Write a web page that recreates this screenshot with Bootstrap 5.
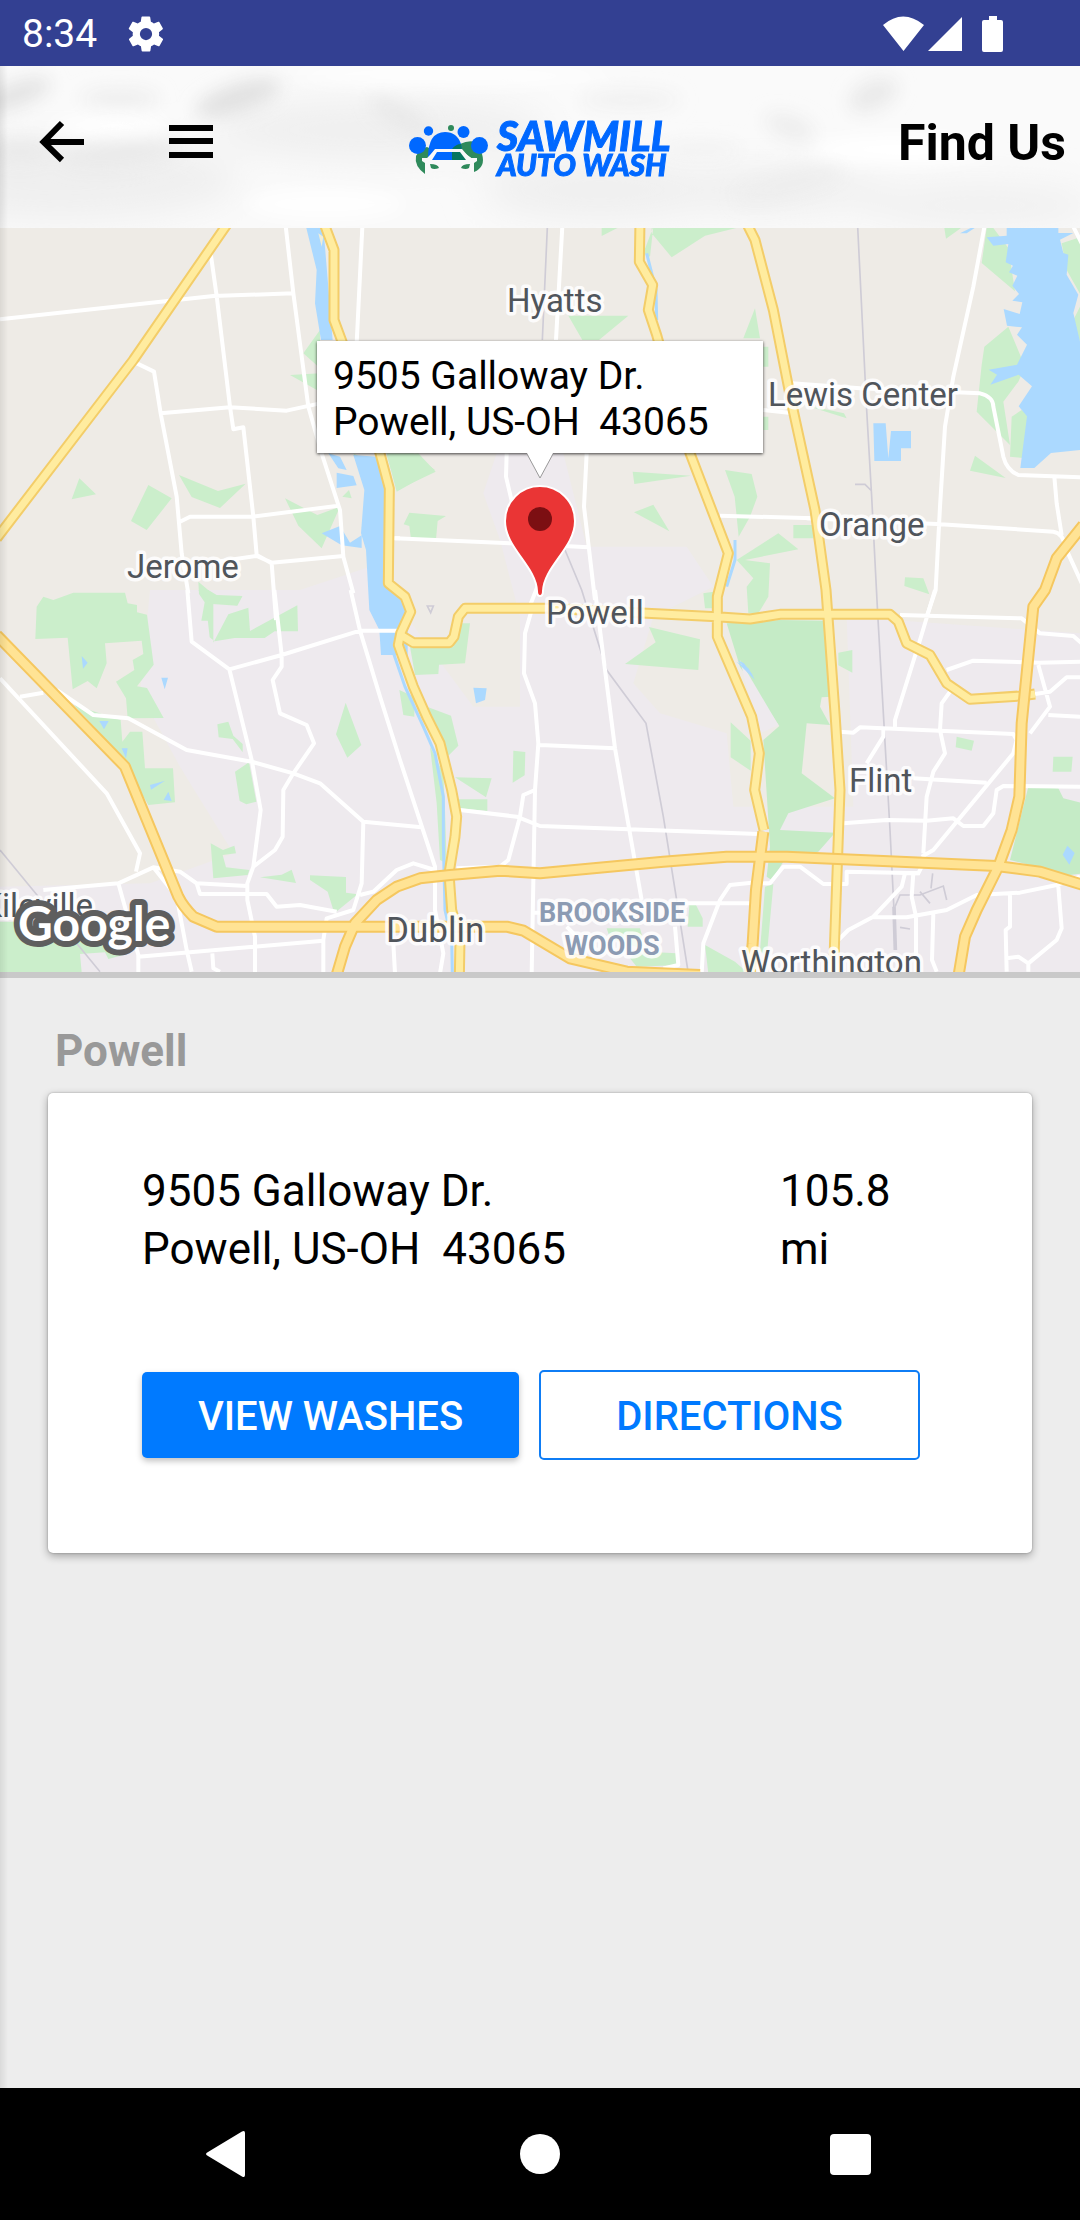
<!DOCTYPE html>
<html lang="en">
<head>
<meta charset="utf-8">
<meta name="viewport" content="width=device-width, initial-scale=1">
<title>Find Us</title>
<link href="https://cdn.jsdelivr.net/npm/bootstrap@5.3.0/dist/css/bootstrap.min.css" rel="stylesheet">
<style>
body{font-family:Roboto,"Liberation Sans",sans-serif;background:#ededed;color:#000}
svg{display:block}
.screen{min-height:100vh}
.status-bar{background:#334092;height:66px;padding:2px 77px 0 22px;font-size:39px;line-height:48px}
.app-body::after{content:"";position:absolute;left:0;top:0;bottom:0;width:8px;background:linear-gradient(90deg,rgba(0,0,0,.08),transparent);pointer-events:none;z-index:3}
.app-header{height:162px;padding:0 14px 8px;display:grid;grid-template-columns:1fr auto 1fr;background:#fafafa}
.clouds{position:absolute;inset:0;width:100%;height:100%}
.tools{gap:80px;padding-left:24px}
.page-title{font-size:50px;line-height:60px;font-weight:700}
.map-area{height:750px;border-bottom:6px solid #c9c9c9;background:#eeebe6}
.map-layer{position:absolute;inset:0;width:100%;height:100%}
.urban{fill:#eeeaee}
.green{fill:#cbeecb}
.forest{fill:#c5ebc6}
.water{fill:#abd9ff}
.stream{fill:none;stroke:#abd9ff;stroke-width:9}
.street{fill:none;stroke:#fff;stroke-width:12;stroke-linejoin:round}
.rail{fill:none;stroke:#cfccd6;stroke-width:5}
.casing{fill:none;stroke:#f3cd69;stroke-width:33;stroke-linejoin:round}
.core{fill:none;stroke:#ffec9f;stroke-width:21;stroke-linejoin:round}
.casing-hw{fill:none;stroke:#f5c75f;stroke-width:36;stroke-linejoin:round}
.core-hw{fill:none;stroke:#ffe394;stroke-width:24;stroke-linejoin:round}
.place{font-size:33px;fill:#50555b;stroke:#fff;stroke-width:7px;stroke-linejoin:round;paint-order:stroke;stroke-opacity:.85}
.place-lg{font-size:35px}
.district{font-size:27px;font-weight:700;fill:#8c9bb3}
.attribution{font-family:Lato,sans-serif;font-size:48px;font-weight:700;fill:#fff;stroke:#5e5e5e;stroke-width:12px;stroke-linejoin:round;paint-order:stroke}
.logo-type{font-family:Lato,sans-serif;font-weight:900;font-style:italic;fill:#0068ff;stroke:#0068ff;stroke-width:1px}
.logo-big{font-size:41px}
.logo-small{font-size:30px}
.callout{position:absolute;left:50%;top:113px;transform:translateX(-50%);width:446px;padding:12px 16px 8px;font-size:39px;line-height:46px;background:#fff;box-shadow:0 1px 3px rgba(0,0,0,.75)}
.callout-tip{position:absolute;left:50%;top:100%;width:26px;height:26px;transform:translateX(-50%)}
.pin{position:absolute;left:50%;top:256px;transform:translateX(-50%)}
.addr{white-space:pre-line;line-height:inherit}
.locations{padding:45px 48px}
.location-name{font-size:44px;line-height:56px;font-weight:700;color:#999;margin:0 0 14px;padding-left:7px}
.location-card{border:0;border-radius:5px;box-shadow:0 3px 8px rgba(0,0,0,.32),0 0 2px rgba(0,0,0,.3)}
.location-body{padding:69px 112px 93px 94px;font-size:44px;line-height:58px}
.location-info{margin-bottom:92px}
.distance{width:18%}
.act{flex:1 1 0;height:86px;font-size:40px;line-height:46px;font-weight:500;border-radius:5px;padding:3px 0 0}
.act-fill{background:#007aff;color:#fff;border:0;box-shadow:0 3px 6px rgba(0,0,0,.25)}
.act-line{height:90px;color:#007aff;background:#fff;border:2px solid #0f7df5}
.actions{gap:20px}
.system-nav{height:132px;gap:268px}
</style>
<script src="https://cdn.jsdelivr.net/npm/bootstrap@5.3.0/dist/js/bootstrap.bundle.min.js"></script>
</head>
<body>
<div class="screen d-flex flex-column">
<div class="status-bar d-flex align-items-center justify-content-between text-white">
  <div class="d-flex align-items-center gap-4">
    <span>8:34</span>
    <svg width="50" height="42" viewBox="0 0 24 24" fill="#fff" aria-hidden="true"><path d="M19.4 13c0-.3.1-.6.1-1s0-.7-.1-1l2.1-1.700c.2-.2.2-.4.1-.6l-2-3.500c-.1-.2-.4-.3-.6-.2l-2.500 1c-.5-.4-1.100-.7-1.700-1l-.4-2.600c0-.2-.2-.4-.5-.4h-4c-.2 0-.5.2-.5.4l-.4 2.600c-.6.3-1.200.6-1.700 1l-2.500-1c-.2-.1-.5 0-.6.2l-2 3.500c-.1.2-.1.5.1.6L4.500 11c0 .3-.1.600-.1 1s0 .7.1 1l-2.100 1.700c-.2.2-.2.4-.1.6l2 3.500c.1.2.4.3.6.2l2.500-1c.5.4 1.100.7 1.700 1l.4 2.600c0 .2.200.4.5.4h4c.2 0 .5-.2.5-.4l.4-2.600c.6-.3 1.200-.6 1.700-1l2.500 1c.2.1.5 0 .6-.2l2-3.500c.1-.2.1-.5-.1-.6zM12 15.500a3.500 3.500 0 1 1 0-7 3.500 3.500 0 0 1 0 7z"/></svg>
  </div>
  <svg width="120" height="38" viewBox="883 14 120 38" fill="#fff" aria-hidden="true"><path d="M883 24q20-17 41 0l-20.500 26zM928 50l34-34v34zM989 15h8v4h4q2 0 2 2v28q0 2-2 2h-17q-2 0-2-2V21q0-2 2-2h5z"/></svg>
</div>

<div class="app-body position-relative flex-grow-1">
<header class="app-header position-relative align-items-center">
  <svg class="clouds" viewBox="0 66 1080 162" preserveAspectRatio="none" aria-hidden="true">
    <defs>
      <filter id="soft" x="-20%" y="-20%" width="140%" height="140%"><feGaussianBlur stdDeviation="9"/></filter>
      <filter id="haze" x="-20%" y="-20%" width="140%" height="140%"><feGaussianBlur stdDeviation="18"/></filter>
    </defs>
    <g filter="url(#haze)" fill="#efefef">
      <ellipse cx="60" cy="180" rx="180" ry="40"/><ellipse cx="380" cy="130" rx="170" ry="30"/><ellipse cx="600" cy="190" rx="120" ry="30"/><ellipse cx="760" cy="190" rx="130" ry="22"/><ellipse cx="980" cy="205" rx="120" ry="20"/>
    </g>
    <g filter="url(#soft)">
      <ellipse cx="20" cy="152" rx="34" ry="11" fill="#e9e9e9"/>
      <ellipse cx="15" cy="95" rx="38" ry="12" fill="#e3e3e3" transform="rotate(-20 15 95)"/>
      <ellipse cx="120" cy="98" rx="40" ry="8" fill="#ececec"/>
      <ellipse cx="238" cy="98" rx="44" ry="14" fill="#e1e1e1" transform="rotate(-18 238 98)"/>
      <ellipse cx="120" cy="154" rx="60" ry="12" fill="#e9e9e9" transform="rotate(-6 120 154)"/>
      <ellipse cx="400" cy="116" rx="34" ry="10" fill="#e8e8e8" transform="rotate(30 400 116)"/>
      <ellipse cx="630" cy="100" rx="50" ry="9" fill="#f0f0f0"/>
      <ellipse cx="873" cy="95" rx="26" ry="14" fill="#e9e9e9" transform="rotate(-25 873 95)"/>
      <ellipse cx="790" cy="127" rx="26" ry="11" fill="#ececec" transform="rotate(20 790 127)"/>
      <ellipse cx="790" cy="184" rx="56" ry="11" fill="#ededed" transform="rotate(-14 790 184)"/>
      <ellipse cx="700" cy="150" rx="40" ry="8" fill="#f2f2f2"/>
      <ellipse cx="325" cy="204" rx="80" ry="16" fill="#fff" opacity=".8"/>
      <ellipse cx="110" cy="126" rx="60" ry="10" fill="#fff"/>
      <ellipse cx="450" cy="76" rx="160" ry="8" fill="#fff"/>
      <ellipse cx="900" cy="150" rx="90" ry="14" fill="#fff"/>
    </g>
  </svg>
  <div class="tools d-flex align-items-center position-relative">
    <button class="btn p-0 border-0" aria-label="Back"><svg width="48" height="48" viewBox="38 119 48 48"><path d="M84 142H45M62 123L43.500 142 62 160" fill="none" stroke="#000" stroke-width="6"/></svg></button>
    <button class="btn p-0 border-0" aria-label="Menu"><svg width="48" height="48" viewBox="166 119 48 48"><path d="M169 125h44v6h-44zM169 138h44v6h-44zM169 152h44v6h-44z"/></svg></button>
  </div>
  <svg class="position-relative overflow-visible" width="262" height="68" viewBox="410 109 262 68" role="img" aria-label="Sawmill Auto Wash">
    <path fill="#2f8a5b" d="M417 156q4-8 11-9l8 4-9 9-1 14q-11-8-9-18zM461 144q10-5 19-1l3 11q4 13-8 18v-12l-12-9z"/>
    <circle cx="452" cy="128" r="3" fill="#2f8a5b"/>
    <g fill="#0068ff"><path d="M429 158q0-26 17-26 12 0 16 12l2 14z"/><circle cx="418.500" cy="145.500" r="8.500"/><circle cx="429.500" cy="131" r="4.700"/><circle cx="464.500" cy="132" r="6"/><circle cx="480.500" cy="145.500" r="8.500"/></g>
    <path fill="#06765f" d="M453 149q4-5 9-5l2 12h-11z"/>
    <path fill="#f8f8f8" d="M426 176V163l-3-2v-3h5l3-3 5-6h27l6 7 3 2h6v3l-3 2v13h-6l-3-5h-32l-3 5z"/>
    <path fill="#0068ff" d="M438 152h15v8h-20z"/><path fill="#06765f" d="M453 152h8l6 8h-14z"/>
    <path fill="#2f8a5b" d="M431 164q8 0 9 4-5 2-8 0zM471 164q-8 0-9 4 5 2 8 0z"/>
    <g class="logo-type">
      <text class="logo-big" x="498" y="151">SAWMILL</text>
      <text class="logo-small" x="498" y="176">AUTO WASH</text>
    </g>
  </svg>
  <h1 class="page-title position-relative text-end m-0">Find Us</h1>
</header>

<section class="map-area position-relative overflow-hidden" aria-label="Map">
  <!-- Terrain and roads, drawn in six tiles at three units per pixel -->
  <svg class="map-layer" viewBox="0 684 3240 2232" preserveAspectRatio="xMidYMid slice" aria-hidden="true">
    <g class="urban">
      <path d="M450 1770L900 1770 1110 1700 1220 1850 1420 2120H1560V1850L1500 1620 1450 1480 1490 1360H1690L1760 1640H2060L2140 1760 1960 1850 1900 2050 1980 2140 2180 2200 2200 2420 2560 2420 2540 1850 3240 1900V2916H0V2660L450 2650 700 2560 540 2300 420 2080Z"/>
    </g>
    <g class="green">
      <g transform="translate(0 660)"><path d="M238 775l50 48-73 15zM445 795l70 40-75 95-47-27zM537 765l117 48 83-22-77 73-85-33zM855 835l97 50 68-25-55 125-70-68zM1027 830l20-20 8 25zM960 330l-50 70 50 45v70l-90-50 90-5zM1060 700l75 40 25 60-70-40zM1160 700h80l65 50-115 65zM1100 850l-15 75 20-10zM595 1085l50 42 82 2-15 28-75-5-8 50h-25l10-55-17-25z"/></g>
      <g transform="translate(1140 660)"><path d="M20 705l95-5 52 55-115 55zM88 878l110 10-25 15-5 55h-75l-5-40-17-5zM665 20h55l-55 28zM815 40V20h270l-110 27-100 65zM790 100l20 10 10-90zM565 287h180l-88 73h-50zM758 755l175 12-170 25zM762 877l58-23 48 80zM1035 750l80 12 17 68-22 60-34 60-12-120zM1070 1020l125-80 60 48-160 32 75 10-5 100-30 50h-30l-5-80 20-25zM970 1120l30-5v50h-25zM1090 355l35-90 15 90zM1150 380h15v60h-15zM1150 590h15v40h-15z"/></g>
      <g transform="translate(2160 660)"><path d="M673 24h50l-45 32zM800 24h20l45 60 20 130-100-85zM865 320l50 120-20 45-45 60 20 130-100-100 15-140 8-55zM875 590l30-20 18 15-8 130-45-5zM765 707l92 67-107-22zM220 915h60v40h-60zM555 1072l55 3 18 48-75-25zM1025 70l60-20V230l-45-80zM1090 240v160l-30-100zM270 560l110 35-8-15-70-15z"/></g>
      <g transform="translate(0 1770)"><path d="M110 50l20-30 30 10 60-22 155 0 8 32 28 5v22l30 7 20 150-50 65 30 5 50 90-108 1-5-60-30-50 55-35-5-30 32-18-5-40-110 8 5 60-30 75-27-22-45 25-15-155-97 4zM595 0h30l25 15 77 3-17 28-70-8v120l45-85 60-20 5 70 142-77 2 78-70 0-30 20-90 0-60 10-15-12-10-90 12-20zM222 345l140 45 5 65 23-30 37 0 8 110 84 0 6 102-80 8-80-140-60-70zM652 403l33-8 15 42 28 25 0 25-30-40-42-5zM1037 338l47 127-42 38-34-70zM705 545l42-28 22 118-30 8-20-10zM632 760l37 20 34-13 5 23-40 5 10 37 70 8-5 15-103 10zM780 862l65-8 30-15 13 40zM930 856l108 5 0 47 35 5-70 57-20-65-53-35zM0 995h70v60h260l40 40-45 12-10-20-75 5 5 55H0z"/></g>
      <g transform="translate(1140 1770)"><path d="M90 170h130l15-70h35l-15 120-78 4-2 28-70 3zM145 352l68 25 22 90-30 30-40-90zM58 300l45 20v60l-33-5zM400 482l36 4-2 70-36 22zM225 562l110 3-17 57zM235 628h87v35l-85-8zM735 222l92-65-20-46 153 37-5 92zM1052 397l60 55v90l-60-40zM150 470l40 80 5 110 5 160-20-10-10-170zM928 945h20l20 40v25h-45zM680 1015l100 0 20 70 90 5 10 35-130 5-20-25 30-30-90-30zM975 1065l90 50 40 35-120 0z"/></g>
      <g transform="translate(2160 1770)"><path d="M355 188l42-8v68l-42-22zM710 440l52 12-7 30-48-10zM1000 500h58l-4 45h-56zM135 890l25-8-20 220-20-20z"/></g>
    </g>
    <g class="forest" transform="translate(2160 1770)">
      <path d="M20 100L180 90 320 92 335 320 305 322 300 350 330 405 260 400 245 550 345 625 205 670 180 720 345 728 295 785 190 815 155 870 140 860 150 770 130 450 178 408 60 230ZM925 590l90 5 15 30 60 15v210l-40 5-180-45z"/>
      <path fill="#eeeaee" d="M60 210l115 195-55 25-40-140z"/>
    </g>
    <g class="water">
      <g transform="translate(0 660)"><path d="M918 20h52l28 340-35 0-18-110 5-100zM985 700l35 10 20 40-25-5zM1010 758l50 10 10 28-60 8zM965 940l55-22 30 50 35-22v38l-60-8zM1060 705l70 5 35 95 8 290 50 50v160h-80l-5-75-30-60-10-180-15-50 10-130z"/><path d="M955 40l10 40 5-30z" fill="#f0eed8"/></g>
      <g transform="translate(2160 660)"><path d="M860 24h155v15l45 0-40 20 10 40 15 5-5 60 35 60-15 55 28 120v290l-95 10-50 45-42 0 20-155-25-30 40-60-40-35-85 30 20-30-25-15 85-15 30-60-30-30 15-22-45-5-10-50 48 15 8-35-30-5 20-20-20-25 15-30-25-10 12-20-22-10 8-55-45 5-20-25 60-5zM460 610h37l8 105 8-82h60v52h-30v38h-80zM720 40l40-20 10 0-30 20z"/></g>
      <g transform="translate(0 1770)"><path d="M245 198l18 20-14 18zM484 263h20l-10 35zM298 393h28l-14 25zM365 475h18l-5 30zM450 585l45-13-42 27zM505 605l10 28-24-3z"/></g>
      <g transform="translate(1140 1770)"><path d="M280 293l40 2-5 35-27 10zM1072 210l20 10 30 40z"/></g>
      <g transform="translate(2160 1770)"><path d="M50 215l35 20 20 35zM1042 767l22 22-16 35-20-30z"/></g>
    </g>
    <path class="stream" transform="translate(1140 1770)" d="M20 130L75 290 130 410 165 490 190 620 190 760 195 960 215 1050 217 1150M800-1010L828-900 830-810M1065-150L1065-90 1040-10"/>
    <g class="rail">
      <path transform="translate(1140 1770)" d="M503-1110L487-750M555-120L605 0 680 240 798 400 850 680 890 930 925 1150M142 48h18l-8 20z"/>
      <path transform="translate(2160 1770)" d="M413-1090L440-540 455-280 473 70 510 720 522 960 M405-317h30l20 20"/>
      <path transform="translate(2160 1770)" d="M522 950L526 1080" stroke-width="11"/>
      <path transform="translate(2160 1770)" d="M525 950l15-35h60l70-27 10 42M600 905l30 35M638 850l-5 45M540 1012l30 5"/>
      <path transform="translate(0 1770)" d="M0 780L300 1145"/>
    </g>
    <g class="street">
      <path transform="translate(0 660)" d="M0 298L640 228 880 220M632 100L650 228 690 560 700 628 730 622 760 890 770 1005 815 1030 828 1200M400 425L462 455 482 580 530 830 545 1000 565 1120M482 580L690 562 860 572 960 550M855 0L880 220 925 560 965 700 1020 870 1030 1010 1060 1120M540 905L570 890H760L1015 857M650 1025L770 1008 815 1028 1030 1008M1088 0L1070 370M1180 955H1200"/>
      <path transform="translate(1140 660)" d="M548 0L528 360M380 700L378 770 420 950M620 700L612 860 645 1140M45 955L390 970 625 982M1020 887L1300 895M480 1080L445 1170"/>
      <path transform="translate(2160 660)" d="M797 0L760 200 700 470 675 620 660 860 647 1110 620 1190M130 570L220 580M215 490L420 505 780 520Q820 530 820 560L850 710Q860 750 895 765L1090 772M1003 770L1010 850 1025 945M260 895L650 912 1000 935Q1030 940 1035 980L1090 1100M1060 20L1090 80"/>
      <path transform="translate(0 1770)" d="M562 0L575 155 688 238 755 510 782 660 760 830 742 880V930L765 1040V1150M688 238L845 195 1080 122H1200M823 0L845 195 845 230 818 270 840 370 920 405 942 460 880 550 850 600 848 740 825 780 760 830M1052 0L1080 122 1140 320 1200 510 1305 830V960L1330 1090 1320 1150M60 320L130 308M0 265L320 610 420 790 408 845M170 300L280 375 385 385 560 480 755 515 880 550 960 580 1090 695 1265 712M1090 695L1085 880 1060 960 980 985 970 1050V1150M130 900L355 880 460 832 540 845 590 880 740 888M590 880L600 912H800L830 950 900 945 1010 965M355 880L415 1095V1150M460 832L530 920 560 1080 575 1145M415 1100L970 1052M637 1090L640 1135 660 1145M1080 915L1120 905 1190 840 1240 820 1305 840M1180 1060L1185 1150"/>
      <path transform="translate(1140 1770)" d="M455 60L435 130 432 250 465 340 475 460 465 600 455 1150M465 600L430 615 420 680 385 810 360 830 230 835M240 660L410 680 480 708 1135 732M480 465L705 475M645 0L670 200 705 475 785 930M455 968H480M890 940H1110M1115 878L1050 885 1020 930 970 1060 965 1150M1130 880H1170L1210 830H1260L1330 882H1400V845L1620 850M885 1010L895 1125 850 1135M560 1010L600 1050"/>
      <path transform="translate(2160 1770)" d="M645 0L600 150 525 390V410M540 75L905 85 960 130 1060 138 1085 160M680 240L760 212 960 218 1080 215M955 225L990 350 930 430M945 312L990 305 1040 262H1080M985 375L1080 380M690 305L665 340 660 420 675 490 640 545 620 620 610 790M360 425L400 428 420 412 880 432 890 450 880 490 640 780 605 800M490 420V440L440 520M580 565L800 578M370 700L500 690 620 692 700 685 730 708H790L820 670 830 600 850 588 1080 590M605 830L595 850H555L545 890 460 980 385 1020 355 1050M460 982H560L680 960 770 915 900 908 1010 885 1080 860M580 850L575 920 588 980V1150M640 970L636 1110 650 1145M870 915V1010L857 1020 860 1145M1015 890L1025 1015 1010 1050 925 1120 895 1100 860 1105M925 1120V1145"/>
    </g>
    <defs>
      <g id="arterials">
        <path transform="translate(0 660)" d="M690 0L400 420-10 955"/>
        <path transform="translate(1140 1770)" d="M-168-1100L-138-1020V-810L-112-740 0-410 28-305 25-20 75 20 92 65 62 130 55 165 100 290 140 380 180 460 215 600 230 680 225 740 207 850 215 960 240 1050 238 1160"/>
        <path transform="translate(1140 1770)" d="M62 135L100 158H208L222 140 235 80 255 55H500L800 70 1010 80 1110 87 1200 73H1530L1555 95 1580 160 1650 195 1700 280 1770 328 1920 318 1965 312M780-1110L778-985 818-915 805-840 830-765 930-410 1045-110 1012 20V140L1115 380 1138 490 1124 600 1152 720"/>
        <path transform="translate(2160 1770)" d="M75-1110L105-1050 160-840 215-560 285-240 318 0 345 370 360 600 355 740 340 1160"/>
      </g>
      <g id="highways">
        <path transform="translate(0 1770)" d="M-10 135L375 530 535 920Q550 950 580 980L650 1010H1520L1570 1022 1710 1105 1880 1145 2100 1155"/>
        <path transform="translate(1140 1770)" d="M-130 1155L-105 1070-75 1000-10 930 50 890 120 865 210 855 360 842 480 850 850 815 1040 800H1220L1850 828 1980 845 2110 885M1150 725L1128 900 1118 1060 1108 1160"/>
        <path transform="translate(2160 1770)" d="M1090-195L1010-95 975 0 940 50 925 200 905 400 898 620 875 720 835 830 770 960 735 1040 715 1160"/>
      </g>
    </defs>
    <use href="#arterials" class="casing"/><use href="#arterials" class="core"/>
    <use href="#highways" class="casing-hw"/><use href="#highways" class="core-hw"/>
  </svg>
  <svg class="map-layer" viewBox="0 228 1080 744" preserveAspectRatio="xMidYMid slice">
    <g class="place">
      <text x="507" y="312">Hyatts</text>
      <text x="127" y="578">Jerome</text>
      <text x="768" y="406">Lewis Center</text>
      <text x="819" y="536">Orange</text>
      <text x="546" y="624">Powell</text>
      <text x="849" y="792">Flint</text>
      <text x="741" y="974">Worthington</text>
      <text x="93" y="917" text-anchor="end">Kileville</text>
      <text class="place-lg" x="386" y="942">Dublin</text>
      <g class="district" text-anchor="middle"><text x="612" y="922">BROOKSIDE</text><text x="612" y="955">WOODS</text></g>
    </g>
    <text class="attribution" x="18" y="941">Google</text>
  </svg>
  <svg class="pin" width="72" height="114" viewBox="0 0 72 114" role="img" aria-label="Powell location"><path d="M36 112q-3 0-3-5c-1-25-32-43-32-70a35 35 0 0 1 70 0c0 27-31 45-32 70q0 5-3 5z" fill="#ea3535" stroke="#fff" stroke-width="2"/><circle cx="36" cy="35" r="12" fill="#7c0f12"/></svg>
  <div class="callout"><span class="addr">9505 Galloway Dr.
Powell, US-OH&nbsp; 43065</span>
    <svg class="callout-tip" viewBox="0 0 26 26" aria-hidden="true"><path d="M0 0L13 25 26 0z" fill="#fff"/><path d="M0 1L13 25 26 1" fill="none" stroke="#999"/></svg>
  </div>
</section>

<main class="locations">
  <h2 class="location-name">Powell</h2>
  <article class="card location-card">
    <div class="card-body location-body">
      <div class="location-info d-flex justify-content-between">
        <address class="m-0 addr">9505 Galloway Dr.
Powell, US-OH&nbsp; 43065</address>
        <div class="distance">105.8 mi</div>
      </div>
      <div class="actions d-flex align-items-center">
        <button class="btn act act-fill text-uppercase">View Washes</button>
        <button class="btn act act-line text-uppercase">Directions</button>
      </div>
    </div>
  </article>
</main>
</div>

<nav class="system-nav bg-black d-flex align-items-center justify-content-center" aria-label="System">
  <button class="btn p-0 border-0" aria-label="Back"><svg width="44" height="48" viewBox="0 0 44 48"><path d="M2 22L36 1.500q3-1.500 3 1.500v42q0 3-3 1.500L2 26q-4-2 0-4z" fill="#fff"/></svg></button>
  <button class="btn p-0 border-0" aria-label="Home"><svg width="44" height="48" viewBox="0 0 44 48"><circle cx="22" cy="24" r="20" fill="#fff"/></svg></button>
  <button class="btn p-0 border-0" aria-label="Recent apps"><svg width="44" height="48" viewBox="0 0 44 48"><rect y="4" width="41" height="41" rx="4" fill="#fff"/></svg></button>
</nav>
</div>
</body>
</html>
